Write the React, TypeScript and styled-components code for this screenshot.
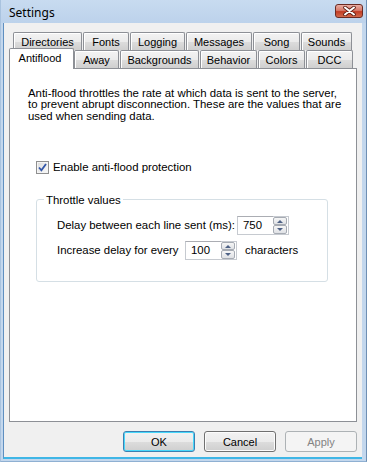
import React, {useState} from "react";
import styled, {createGlobalStyle} from "styled-components";

const FONT = `"Liberation Sans", Arial, sans-serif`;

const BACK_TABS: [string, number][] = [["Directories", 70], ["Fonts", 47], ["Logging", 56], ["Messages", 67], ["Song", 48], ["Sounds", 52]];
const FRONT_TABS: [string, number][] = [["Antiflood", 65], ["Away", 46], ["Backgrounds", 80], ["Behavior", 58], ["Colors", 48], ["DCC", 48]];

const Global = createGlobalStyle`
  html, body {
    margin: 0;
    padding: 0;
    background: #ffffff;
  }
  body {
    font-family: ${FONT};
    font-size: 11.4px;
    color: #000;
  }
`

const Spinner = ({value, width}: {value: string, width: number}) => {
	return <SpinBox>
		<SpinText style={{width}}>{value}</SpinText>
		<SpinButtons>
			<SpinButton><Arrow $up/></SpinButton>
			<SpinButton><Arrow/></SpinButton>
		</SpinButtons>
	</SpinBox>
}

function App() {
	const [active, setActive] = useState("Antiflood")
	const [enabled, setEnabled] = useState(true)

	return <>
		<Global/>
		<Window>
			<TitleBar>
				<Title>Settings</Title>
				<CloseButton>
					<svg width="13" height="10" viewBox="0 0 13 10">
						<path d="M2 1.5 L11 8.5 M11 1.5 L2 8.5" stroke="#5a1d14" strokeWidth="3.6" strokeLinecap="round"/>
						<path d="M2 1.5 L11 8.5 M11 1.5 L2 8.5" stroke="#ffffff" strokeWidth="2" strokeLinecap="round"/>
					</svg>
				</CloseButton>
			</TitleBar>
			<Client>
				<TabStrip>
					<TabRow $indent={4}>
						{BACK_TABS.map(([name, w]) => (
							<Tab key={name} $w={w} onClick={() => setActive(name)}>{name}</Tab>
						))}
					</TabRow>
					<TabRow $indent={0}>
						{FRONT_TABS.map(([name, w]) => name === active
							? <SelectedTab key={name} $w={w}>{name}</SelectedTab>
							: <Tab key={name} $w={w} onClick={() => setActive(name)}>{name}</Tab>
						)}
					</TabRow>
				</TabStrip>
				<Panel>
					<Description>
						Anti-flood throttles the rate at which data is sent to the server,<br/>
						to prevent abrupt disconnection. These are the values that are<br/>
						used when sending data.
					</Description>
					<CheckRow onClick={() => setEnabled(!enabled)}>
						<CheckBox>
							{enabled && <svg width="9" height="9" viewBox="0 0 9 9">
								<path d="M1 4.5 L3.4 7.3 L8 1" stroke="#3256a8" strokeWidth="1.8" fill="none"/>
							</svg>}
						</CheckBox>
						Enable anti-flood protection
					</CheckRow>
					<GroupBox>
						<GroupLegend>Throttle values</GroupLegend>
						<FieldRow>
							<FieldLabel $w={180}>Delay between each line sent (ms):</FieldLabel>
							<Spinner value="750" width={36}/>
						</FieldRow>
						<FieldRow>
							<FieldLabel $w={128}>Increase delay for every</FieldLabel>
							<Spinner value="100" width={36}/>
							<Suffix>characters</Suffix>
						</FieldRow>
					</GroupBox>
				</Panel>
				<ButtonBar>
					<DialogButton $default>OK</DialogButton>
					<DialogButton>Cancel</DialogButton>
					<DialogButton disabled>Apply</DialogButton>
				</ButtonBar>
			</Client>
		</Window>
	</>
}

const Window = styled.div`
  width: 367px;
  height: 462px;
  box-sizing: border-box;
  background: #c3d7ed;
  border-left: 1px solid #a9c3df;
  border-right: 1px solid #6e8fb4;
  border-bottom: 1px solid #8fb0d2;
  display: flex;
  flex-direction: column;
  padding: 0 4px 3px 2px;
`

const TitleBar = styled.div`
  height: 23px;
  flex: none;
  display: flex;
  align-items: flex-start;
  justify-content: space-between;
  background: linear-gradient(#c8dbf0, #bcd2eb);
  margin: 0 -4px 0 -2px;
  padding: 0 4px 0 8px;
  font-family: "Noto Sans", ${FONT};
  font-size: 12px;
`

const Title = styled.span`
  padding-top: 4px;
`

const CloseButton = styled.div`
  width: 28px;
  height: 14px;
  margin-top: 4px;
  margin-right: -1px;
  box-sizing: border-box;
  border: 1px solid #6a2a22;
  border-radius: 3px;
  background: linear-gradient(#e9ada3 0%, #d77b6b 45%, #c23c24 55%, #d26a4c 100%);
  display: flex;
  align-items: center;
  justify-content: center;
`

const Client = styled.div`
  flex: 1;
  background: #f0f0f0;
  border-left: 1px solid #5f8fc0;
  border-bottom: 2px solid #3fb6e6;
  padding: 9px 5px 5px 5px;
  display: flex;
  flex-direction: column;
`

const TabStrip = styled.div`
  display: flex;
  flex-direction: column;
  height: 36px;
  position: relative;
  z-index: 1;
  font-size: 11px;
`

const TabRow = styled.div<{$indent: number}>`
  display: flex;
  height: 18px;
  align-items: flex-end;
  padding-left: ${p => p.$indent}px;
`

const Tab = styled.div<{$w: number}>`
  width: ${p => p.$w - 1}px;
  margin-right: 1px;
  height: 18px;
  box-sizing: border-box;
  border: 1px solid #8d9096;
  border-bottom: none;
  border-radius: 2px 2px 0 0;
  background: linear-gradient(#f3f3f3 0%, #ebebeb 50%, #dddddd 51%, #cfcfcf 100%);
  box-shadow: inset 1px 1px 0 #ffffff;
  display: flex;
  align-items: center;
  justify-content: center;
  padding-top: 1px;
  cursor: default;
`

const SelectedTab = styled.div<{$w: number}>`
  width: ${p => p.$w}px;
  height: 21px;
  margin-bottom: -1px;
  box-sizing: border-box;
  border: 1px solid #8d9096;
  border-bottom: none;
  border-radius: 2px 2px 0 0;
  background: #ffffff;
  display: flex;
  align-items: flex-start;
  justify-content: center;
  padding-top: 3px;
  padding-right: 3px;
`

const Panel = styled.div`
  height: 354px;
  box-sizing: border-box;
  background: #ffffff;
  border: 1px solid #8d9096;
  padding: 19px 0 0 18px;
  display: flex;
  flex-direction: column;
`

const Description = styled.p`
  margin: 0;
  line-height: 11.3px;
`

const CheckRow = styled.label`
  display: flex;
  align-items: center;
  gap: 4px;
  margin: 39px 0 0 8px;
  cursor: default;
`

const CheckBox = styled.span`
  width: 13px;
  height: 13px;
  box-sizing: border-box;
  border: 1px solid #8f8f8f;
  background: linear-gradient(135deg, #dcdcdc, #fafafa);
  box-shadow: inset 0 0 0 1px #f4f4f4;
  display: flex;
  align-items: center;
  justify-content: center;
`

const GroupBox = styled.fieldset`
  margin: 20px 0 0 8px;
  width: 292px;
  height: 88px;
  box-sizing: border-box;
  border: 1px solid #d5dfe5;
  border-radius: 3px;
  padding: 10px 0 0 20px;
  display: flex;
  flex-direction: column;
  gap: 6px;
`

const GroupLegend = styled.legend`
  padding: 0 2px;
  margin-left: -13px;
`

const FieldRow = styled.div`
  display: flex;
  align-items: center;
  height: 19px;
`

const FieldLabel = styled.span<{$w: number}>`
  width: ${p => p.$w}px;
  flex: none;
`

const Suffix = styled.span`
  margin-left: 8px;
`

const SpinBox = styled.div`
  display: flex;
  height: 19px;
`

const SpinText = styled.div`
  box-sizing: border-box;
  height: 19px;
  border: 1px solid #c6cad0;
  border-top-color: #abadb3;
  border-right: none;
  background: #fff;
  padding: 0 0 0 5px;
  display: flex;
  align-items: center;
`

const SpinButtons = styled.div`
  width: 16px;
  display: flex;
  flex-direction: column;
  box-sizing: border-box;
  border: 1px solid #c6cad0;
  border-left: none;
  padding: 0 1px 0 0;
`

const SpinButton = styled.div`
  flex: 1;
  box-sizing: border-box;
  border: 1px solid #a6abb3;
  border-radius: 2px;
  background: linear-gradient(#f6f6f6, #dfe1e5);
  display: flex;
  align-items: center;
  justify-content: center;
`

const Arrow = styled.span<{$up?: boolean}>`
  width: 0;
  height: 0;
  border-left: 3px solid transparent;
  border-right: 3px solid transparent;
  ${p => p.$up ? "border-bottom: 3px solid #4d6185;" : "border-top: 3px solid #4d6185;"}
`

const ButtonBar = styled.div`
  display: flex;
  justify-content: flex-end;
  gap: 9px;
  margin-top: 9px;
`

const DialogButton = styled.button<{$default?: boolean}>`
  width: 72px;
  height: 21px;
  box-sizing: border-box;
  font-family: ${FONT};
  font-size: 11px;
  padding: 0;
  border-radius: 3px;
  border: 1px solid ${p => p.$default ? "#3c7fb1" : "#707070"};
  color: #000;
  background: linear-gradient(#f2f2f2 0%, #ebebeb 50%, #dddddd 51%, #cfcfcf 100%);
  box-shadow: inset 0 0 0 1px ${p => p.$default ? "#48d8fb" : "#fcfcfc"};

  &:disabled {
    border-color: #adb2b5;
    color: #838383;
    background: #f4f4f4;
    box-shadow: none;
  }
`

export default App
